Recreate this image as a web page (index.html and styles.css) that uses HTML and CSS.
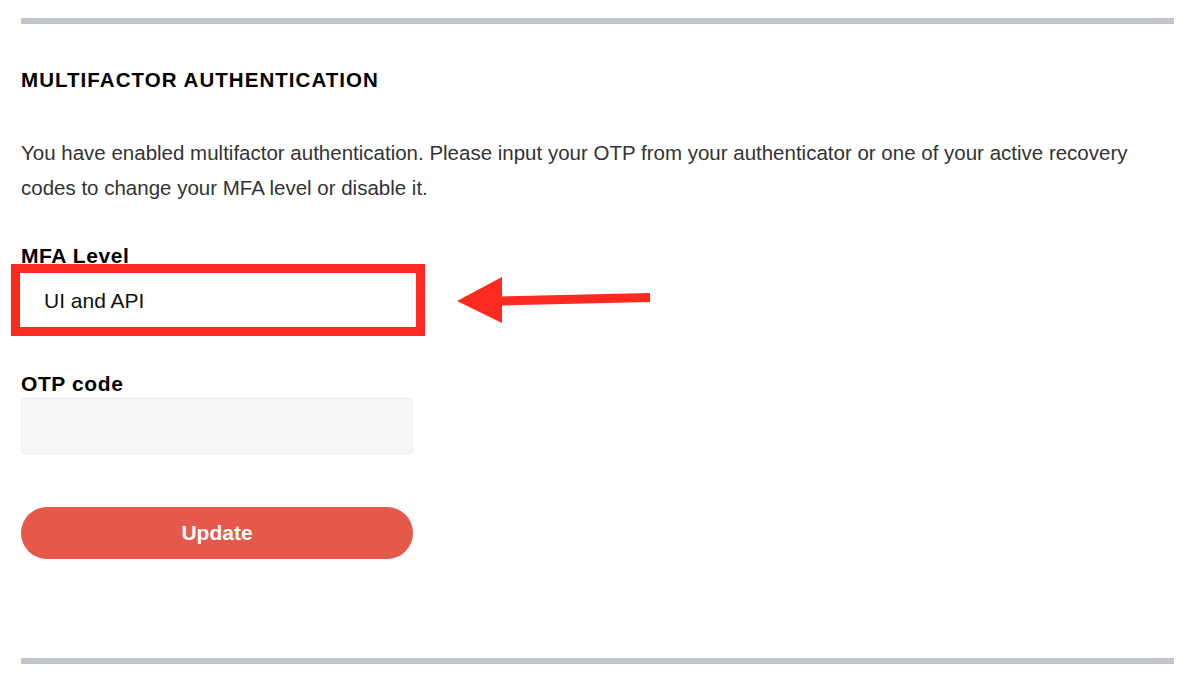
FILE: index.html
```html
<!DOCTYPE html>
<html lang="en">
<head>
<meta charset="utf-8">
<title>Multifactor Authentication</title>
<link rel="stylesheet" href="styles.css">
</head>
<body>
<div class="page">
  <div class="rule"></div>
  <h2 class="title">MULTIFACTOR AUTHENTICATION</h2>
  <p class="desc">You have enabled multifactor authentication. Please input your OTP from your authenticator or one of your active recovery codes to change your MFA level or disable it.</p>
  <div class="field">
    <label class="label">MFA Level</label>
    <div class="select-wrap">
      <div class="select">UI and API</div>
      <span class="annot-box"></span>
      <svg class="annot-arrow" width="210" height="60" viewBox="0 0 210 60" xmlns="http://www.w3.org/2000/svg">
        <polygon points="7,31 52,7 52,53" fill="#fd2a1f"/>
        <polygon points="50,26.5 200,23 200,32 50,35.5" fill="#fd2a1f"/>
      </svg>
    </div>
  </div>
  <div class="field field-otp">
    <label class="label">OTP code</label>
    <div class="input"></div>
  </div>
  <button class="btn">Update</button>
  <div class="rule rule-bottom"></div>
</div>
</body>
</html>
```
FILE: styles.css
```css
* { box-sizing: border-box; }
html, body { margin: 0; padding: 0; background: #ffffff; }
body { font-family: "Liberation Sans", Arial, sans-serif; color: #111; }
.page { width: 1200px; height: 680px; padding: 18px 26px 0 21px; overflow: hidden; }
.rule { height: 6px; background: #c1c4cb; width: 1153px; }
.rule-bottom { margin-top: 99px; }
.title { margin: 44px 0 0; font-size: 20.5px; line-height: 24px; font-weight: 700; letter-spacing: 1.05px; color: #000; }
.desc { margin: 43px 0 0; font-size: 20.5px; line-height: 35px; color: #333; width: 1125px; font-weight: 400; }
.field { margin-top: 39px; }
.field-otp { margin-top: 46px; }
.label { display: block; font-size: 21px; line-height: 24px; font-weight: 700; color: #000; letter-spacing: 0.6px; }
.select-wrap { position: relative; width: 392px; margin-top: 2px; }
.select { height: 56px; padding: 5px 0 0 23px; display: flex; align-items: center; font-size: 21px; color: #111; background: #fff; border-right: 1px solid #eeeeee; }
.annot-box { position: absolute; left: -10px; top: -6px; width: 414px; height: 72px; border: 9px solid #fd2a1f; }
.annot-arrow { position: absolute; left: 429px; top: 0px; }
.input { margin-top: 2px; width: 392px; height: 56px; background: #f6f6f6; border: 1px solid #ececec; border-radius: 4px; }
.btn { display: block; margin-top: 53px; width: 392px; height: 52px; border: none; border-radius: 26px; background: #e5594a; color: #fff; font-family: "Liberation Sans", Arial, sans-serif; font-size: 21px; font-weight: 700; padding: 0; }
```
